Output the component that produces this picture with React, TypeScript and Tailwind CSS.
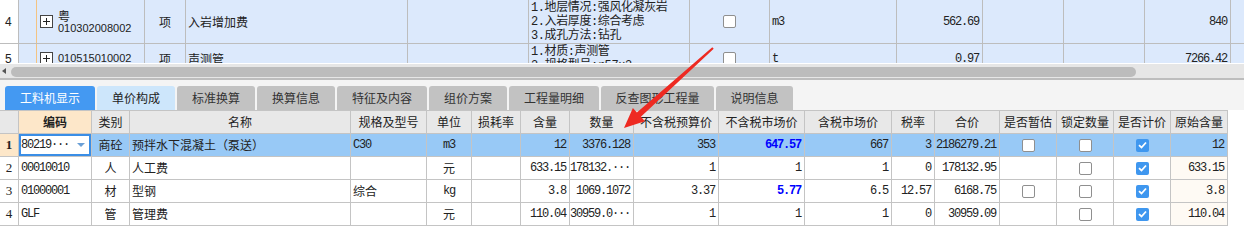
import React from 'react';

const mono = "font-['Liberation_Mono','Noto_Sans_CJK_SC',monospace] text-[12px] tracking-[-1.2px]";
const cjk = "font-['Noto_Sans_CJK_SC','Noto_Sans',sans-serif] text-[12px]";
const cell = 'h-[23px] border-r border-b border-[#c4c4c4] flex items-center overflow-hidden whitespace-nowrap';
const topCell = 'border-r border-b border-[#bdbdbd] flex items-center overflow-hidden whitespace-nowrap';

function Box({ checked }: { checked?: boolean }) {
  if (checked) {
    return (
      <div className="w-[13px] h-[13px] rounded-[2px] bg-[#3f97ef] flex items-center justify-center">
        <svg width="9" height="8" viewBox="0 0 9 8">
          <path d="M1 4.2 L3.5 6.5 L8 1.5" stroke="#fff" strokeWidth="1.8" fill="none" />
        </svg>
      </div>
    );
  }
  return <div className="w-[13px] h-[13px] rounded-[2px] border border-[#8f8f8f] bg-white" />;
}

function Plus() {
  return (
    <div className="w-[13px] h-[13px] border border-[#444] bg-white flex items-center justify-center">
      <svg width="9" height="9" viewBox="0 0 9 9">
        <path d="M1 4.5 H8 M4.5 1 V8" stroke="#222" strokeWidth="1" />
      </svg>
    </div>
  );
}

function TopRow({
  n,
  h,
  prov,
  code,
  name,
  feats,
  unit,
  price,
  total,
}: {
  n: string;
  h: string;
  prov?: string;
  code: string;
  name: string;
  feats: string[];
  unit: string;
  price: string;
  total: string;
}) {
  return (
    <>
      <div className={`${topCell} ${h} bg-white pl-[5px] font-['Liberation_Sans',sans-serif] text-[12px] text-[#222]`}>{n}</div>
      <div className={`${topCell} ${h}`}>
        <div className="w-[18px] h-full border-r border-[#f3c382]" />
        <div className="ml-[3px]">
          <Plus />
        </div>
        <div className="ml-[5px] flex flex-col leading-[13px] text-[#222]">
          {prov && <span className={cjk}>{prov}</span>}
          <span className="font-['Liberation_Sans',sans-serif] text-[11px]">{code}</span>
        </div>
      </div>
      <div className={`${topCell} ${h} justify-center ${cjk} text-[#222]`}>项</div>
      <div className={`${topCell} ${h} pl-[2px] ${cjk} text-[#222]`}>{name}</div>
      <div className={`${topCell} ${h}`} />
      <div className={`${topCell} ${h} pl-[2px] flex-col !items-start justify-center leading-[14px] text-[#222]`}>
        {feats.map((f) => (
          <span key={f} className="font-['Liberation_Mono','Noto_Sans_CJK_SC',monospace] text-[12px] tracking-[-0.4px]">
            {f}
          </span>
        ))}
      </div>
      <div className={`${topCell} ${h} justify-center`}>
        <Box />
      </div>
      <div className={`${topCell} ${h} pl-[2px] ${mono} text-[#222]`}>{unit}</div>
      <div className={`${topCell} ${h} justify-end pr-[3px] ${mono} text-[#222]`}>{price}</div>
      <div className={`${topCell} ${h}`} />
      <div className={`${topCell} ${h}`} />
      <div className={`${topCell} ${h} justify-end pr-[3px] ${mono} text-[#222]`}>{total}</div>
      <div className={`${topCell} ${h}`} />
    </>
  );
}

const tabs = [
  { t: '工料机显示', w: 'w-[90px]', c: 'bg-[#4499f2] text-white' },
  { t: '单价构成', w: 'w-[78px]', c: 'bg-[#cde6fb] text-[#222]' },
  { t: '标准换算', w: 'w-[78px]', c: 'bg-[#c2c2c2] text-[#333]' },
  { t: '换算信息', w: 'w-[78px]', c: 'bg-[#c2c2c2] text-[#333]' },
  { t: '特征及内容', w: 'w-[90px]', c: 'bg-[#c2c2c2] text-[#333]' },
  { t: '组价方案', w: 'w-[78px]', c: 'bg-[#c2c2c2] text-[#333]' },
  { t: '工程量明细', w: 'w-[90px]', c: 'bg-[#c2c2c2] text-[#333]' },
  { t: '反查图形工程量', w: 'w-[113px]', c: 'bg-[#c2c2c2] text-[#333]' },
  { t: '说明信息', w: 'w-[77px]', c: 'bg-[#c2c2c2] text-[#333]' },
];

const heads = [
  '',
  '编码',
  '类别',
  '名称',
  '规格及型号',
  '单位',
  '损耗率',
  '含量',
  '数量',
  '不含税预算价',
  '不含税市场价',
  '含税市场价',
  '税率',
  '合价',
  '是否暂估',
  '锁定数量',
  '是否计价',
  '原始含量',
];

const rows = [
  { n: '1', code: '80219···', kind: '商砼', name: '预拌水下混凝土（泵送）', spec: 'C30', unit: 'm3', content: '12', qty: '3376.128', pre: '353', mkt: '647.57', blue: true, tax: '667', rate: '3', total: '2186279.21', est: true, orig: '12', sel: true },
  { n: '2', code: '00010010', kind: '人', name: '人工费', spec: '', unit: '元', content: '633.15', qty: '178132.···', pre: '1', mkt: '1', blue: false, tax: '1', rate: '0', total: '178132.95', est: false, orig: '633.15', sel: false },
  { n: '3', code: '01000001', kind: '材', name: '型钢', spec: '综合', unit: 'kg', content: '3.8', qty: '1069.1072', pre: '3.37', mkt: '5.77', blue: true, tax: '6.5', rate: '12.57', total: '6168.75', est: true, orig: '3.8', sel: false },
  { n: '4', code: 'GLF', kind: '管', name: '管理费', spec: '', unit: '元', content: '110.04', qty: '30959.0···', pre: '1', mkt: '1', blue: false, tax: '1', rate: '0', total: '30959.09', est: false, orig: '110.04', sel: false },
];

const isCjk = (s: string) => /[\u4e00-\u9fff]/.test(s);

export default function App() {
  return (
    <div className="relative w-[1244px] h-[241px] overflow-hidden bg-white text-[#222]">
      {/* upper list */}
      <div className="h-[63px] overflow-hidden bg-[#dce9fc]">
        <div className="grid grid-cols-[19px_126px_41px_222px_121px_161px_80px_127px_86px_81px_81px_86px_14px]">
          <TopRow
            n="4"
            h="h-[44px]"
            prov="粤"
            code="010302008002"
            name="入岩增加费"
            feats={['1.地层情况:强风化凝灰岩', '2.入岩厚度:综合考虑', '3.成孔方法:钻孔']}
            unit="m3"
            price="562.69"
            total="840"
          />
          <TopRow
            n="5"
            h="h-[30px]"
            code="010515010002"
            name="声测管"
            feats={['1.材质:声测管', '2.规格型号:φ57×3']}
            unit="t"
            price="0.97"
            total="7266.42"
          />
        </div>
      </div>

      {/* scroll bar */}
      <div className="h-px bg-white" />
      <div className="h-[14px] bg-[#e6e6e6] flex items-start">
        <div className="mt-[4px] ml-[2px] w-0 h-0 border-y-[3px] border-y-transparent border-r-[4px] border-r-[#555]" />
        <div className="mt-[3px] ml-[5px] w-[1125px] h-[10px] rounded-full bg-[#bcbcbc]" />
      </div>
      <div className="h-[2px] bg-[#bdbdbd]" />

      {/* tabs */}
      <div className="h-[30px] bg-[#f4f4f4] pt-[6px] pl-[5px] flex gap-[2px]">
        {tabs.map((t) => (
          <div key={t.t} className={`${t.w} ${t.c} h-[24px] rounded-t-[3px] flex items-center justify-center ${cjk}`}>
            {t.t}
          </div>
        ))}
      </div>

      {/* detail grid */}
      <div className="w-[1228px] border-t border-[#c4c4c4] grid grid-cols-[19px_73px_38px_221px_76px_45px_49px_49px_64px_85px_86px_87px_43px_65px_57px_57px_57px_57px]">
        {heads.map((h, i) => (
          <div
            key={i}
            className={`${cell} justify-center ${cjk} ${i === 1 ? 'bg-[#fde7c9] font-bold' : 'bg-[#e8e8e8]'}`}
          >
            {h}
          </div>
        ))}

        {rows.map((r) => {
          const bg = r.sel ? 'bg-[#98c9f6]' : 'bg-white';
          return (
            <React.Fragment key={r.n}>
              <div
                className={`${cell} justify-center font-['Liberation_Serif',serif] text-[13px] ${
                  r.sel ? 'bg-[#fde7c9] font-bold' : 'bg-white'
                }`}
              >
                {r.n}
              </div>
              <div
                className={`${cell} pl-[2px] ${mono} ${
                  r.sel ? 'bg-white shadow-[inset_0_0_0_2px_#3a8ee6] justify-between pr-[6px]' : bg
                }`}
              >
                <span>{r.code}</span>
                {r.sel && (
                  <div className="w-0 h-0 border-x-[4px] border-x-transparent border-t-[4px] border-t-[#6a9fd6]" />
                )}
              </div>
              <div className={`${cell} ${bg} justify-center ${cjk}`}>{r.kind}</div>
              <div className={`${cell} ${bg} pl-[2px] ${cjk}`}>{r.name}</div>
              <div className={`${cell} ${bg} pl-[2px] ${isCjk(r.spec) ? cjk : mono}`}>{r.spec}</div>
              <div className={`${cell} ${bg} justify-center ${isCjk(r.unit) ? cjk : mono}`}>{r.unit}</div>
              <div className={`${cell} ${bg}`} />
              <div className={`${cell} ${bg} justify-end pr-[3px] ${mono}`}>{r.content}</div>
              <div className={`${cell} ${bg} justify-end pr-[3px] ${mono}`}>{r.qty}</div>
              <div className={`${cell} ${bg} justify-end pr-[3px] ${mono}`}>{r.pre}</div>
              <div className={`${cell} ${bg} justify-end pr-[3px] ${mono} ${r.blue ? 'text-[#0000ff] font-bold' : ''}`}>
                {r.mkt}
              </div>
              <div className={`${cell} ${bg} justify-end pr-[3px] ${mono}`}>{r.tax}</div>
              <div className={`${cell} ${bg} justify-end pr-[3px] ${mono}`}>{r.rate}</div>
              <div className={`${cell} ${bg} justify-end pr-[3px] ${mono}`}>{r.total}</div>
              <div className={`${cell} ${bg} justify-center`}>{r.est && <Box />}</div>
              <div className={`${cell} ${bg} justify-center`}>
                <Box />
              </div>
              <div className={`${cell} ${bg} justify-center`}>
                <Box checked />
              </div>
              <div className={`${cell} ${r.sel ? bg : 'bg-[#fefaf4]'} justify-end pr-[3px] ${mono}`}>{r.orig}</div>
            </React.Fragment>
          );
        })}
      </div>

      {/* red annotation arrow */}
      <svg className="absolute left-0 top-0 pointer-events-none" width="1244" height="241">
        <polygon
          points="712.3,47.3 636.9,112.4 632.9,107.9 624,128 644.9,121.3 640.9,116.8 713.7,48.7"
          fill="#ee2a22"
        />
      </svg>
    </div>
  );
}
